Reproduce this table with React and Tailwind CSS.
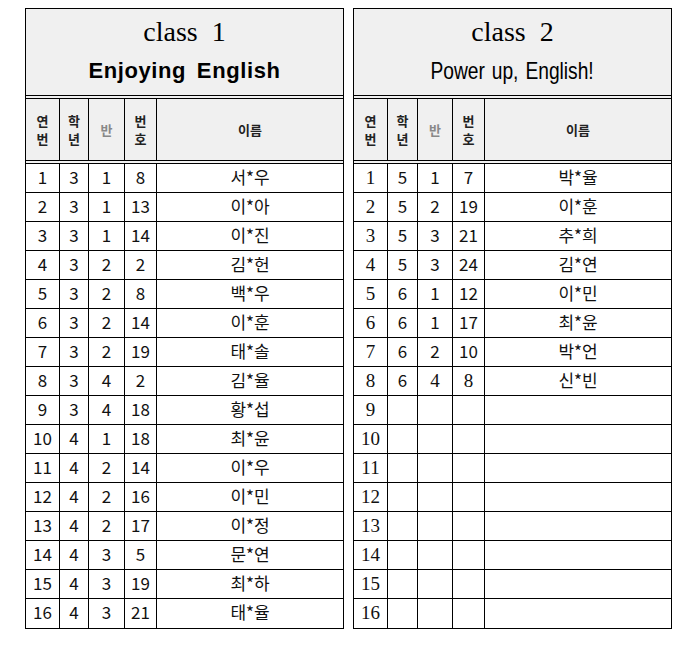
const class1 = [
  [1, 3, 1, 8, "서*우"],
  [2, 3, 1, 13, "이*아"],
  [3, 3, 1, 14, "이*진"],
  [4, 3, 2, 2, "김*헌"],
  [5, 3, 2, 8, "백*우"],
  [6, 3, 2, 14, "이*훈"],
  [7, 3, 2, 19, "태*솔"],
  [8, 3, 4, 2, "김*율"],
  [9, 3, 4, 18, "황*섭"],
  [10, 4, 1, 18, "최*윤"],
  [11, 4, 2, 14, "이*우"],
  [12, 4, 2, 16, "이*민"],
  [13, 4, 2, 17, "이*정"],
  [14, 4, 3, 5, "문*연"],
  [15, 4, 3, 19, "최*하"],
  [16, 4, 3, 21, "태*율"],
];

const class2 = [
  [1, 5, 1, 7, "박*율"],
  [2, 5, 2, 19, "이*훈"],
  [3, 5, 3, 21, "추*희"],
  [4, 5, 3, 24, "김*연"],
  [5, 6, 1, 12, "이*민"],
  [6, 6, 1, 17, "최*윤"],
  [7, 6, 2, 10, "박*언"],
  [8, 6, 4, 8, "신*빈"],
];
for (let i = 9; i <= 16; i++) class2.push([i, "", "", "", ""]);

const sans = "font-['Noto_Sans_CJK_KR','Noto_Sans',sans-serif]";
const serif = "font-['Liberation_Serif','DejaVu_Serif',serif]";

function Header({ cols }) {
  const label = "font-['Noto_Sans_CJK_KR',sans-serif] text-[13px] font-bold leading-[18px] text-[#222]";
  return (
    <div className={`grid ${cols} h-[65px] border-b-4 border-double border-black bg-[#f0f0f0]`}>
      <div className={`flex flex-col items-center justify-center ${label}`}>
        <span>연</span>
        <span>번</span>
      </div>
      <div className={`flex flex-col items-center justify-center border-l border-black ${label}`}>
        <span>학</span>
        <span>년</span>
      </div>
      <div className={`flex items-center justify-center border-l border-black ${label} text-[#888]`}>
        반
      </div>
      <div className={`flex flex-col items-center justify-center border-l border-black ${label}`}>
        <span>번</span>
        <span>호</span>
      </div>
      <div className={`flex items-center justify-center border-l border-black ${label}`}>이름</div>
    </div>
  );
}

function ClassTable({ title, subtitle, subClass, cols, rows, serifFirst }) {
  return (
    <div className="w-[319px] border border-black">
      <div className="flex h-[90px] flex-col items-center border-b-4 border-double border-black bg-[#f0f0f0] pt-[5px]">
        <div className={`${serif} whitespace-pre text-[28px] leading-[36px] text-black`}>{title}</div>
        <div className={`mt-[6px] text-[22px] leading-[30px] text-black ${subClass}`}>{subtitle}</div>
      </div>
      <Header cols={cols} />
      {rows.map((r, i) => (
        <div
          key={r[0]}
          className={`grid ${cols} h-[29px] text-[17px] leading-[25px] text-[#111] ${
            i < rows.length - 1 ? "border-b border-black" : ""
          }`}
        >
          <div className={`text-center ${serifFirst ? serif + " text-[19px] leading-[27px]" : sans}`}>{r[0]}</div>
          <div className={`border-l border-black text-center ${sans}`}>{r[1]}</div>
          <div className={`border-l border-black text-center ${serifFirst && r[0] === 8 ? serif + " text-[19px] leading-[27px]" : sans}`}>{r[2]}</div>
          <div className={`border-l border-black text-center ${serifFirst && r[0] === 8 ? serif + " text-[19px] leading-[27px]" : sans}`}>{r[3]}</div>
          <div className={`border-l border-black text-center ${sans}`}>{r[4]}</div>
        </div>
      ))}
    </div>
  );
}

export default function App() {
  return (
    <div className="flex h-[651px] w-[700px] items-start gap-[9px] bg-white pl-[25px] pt-[8px]">
      <ClassTable
        title="class  1"
        subtitle="Enjoying English"
        subClass="font-['Liberation_Sans',sans-serif] font-bold tracking-[0.6px] [word-spacing:4px]"
        cols="grid-cols-[33px_29px_36px_32px_1fr]"
        rows={class1}
        serifFirst={false}
      />
      <ClassTable
        title="class  2"
        subtitle="Power up, English!"
        subClass="font-['Liberation_Sans',sans-serif] text-[24px] scale-x-[0.8] [word-spacing:2px]"
        cols="grid-cols-[33px_30px_35px_32px_1fr]"
        rows={class2}
        serifFirst={true}
      />
    </div>
  );
}
